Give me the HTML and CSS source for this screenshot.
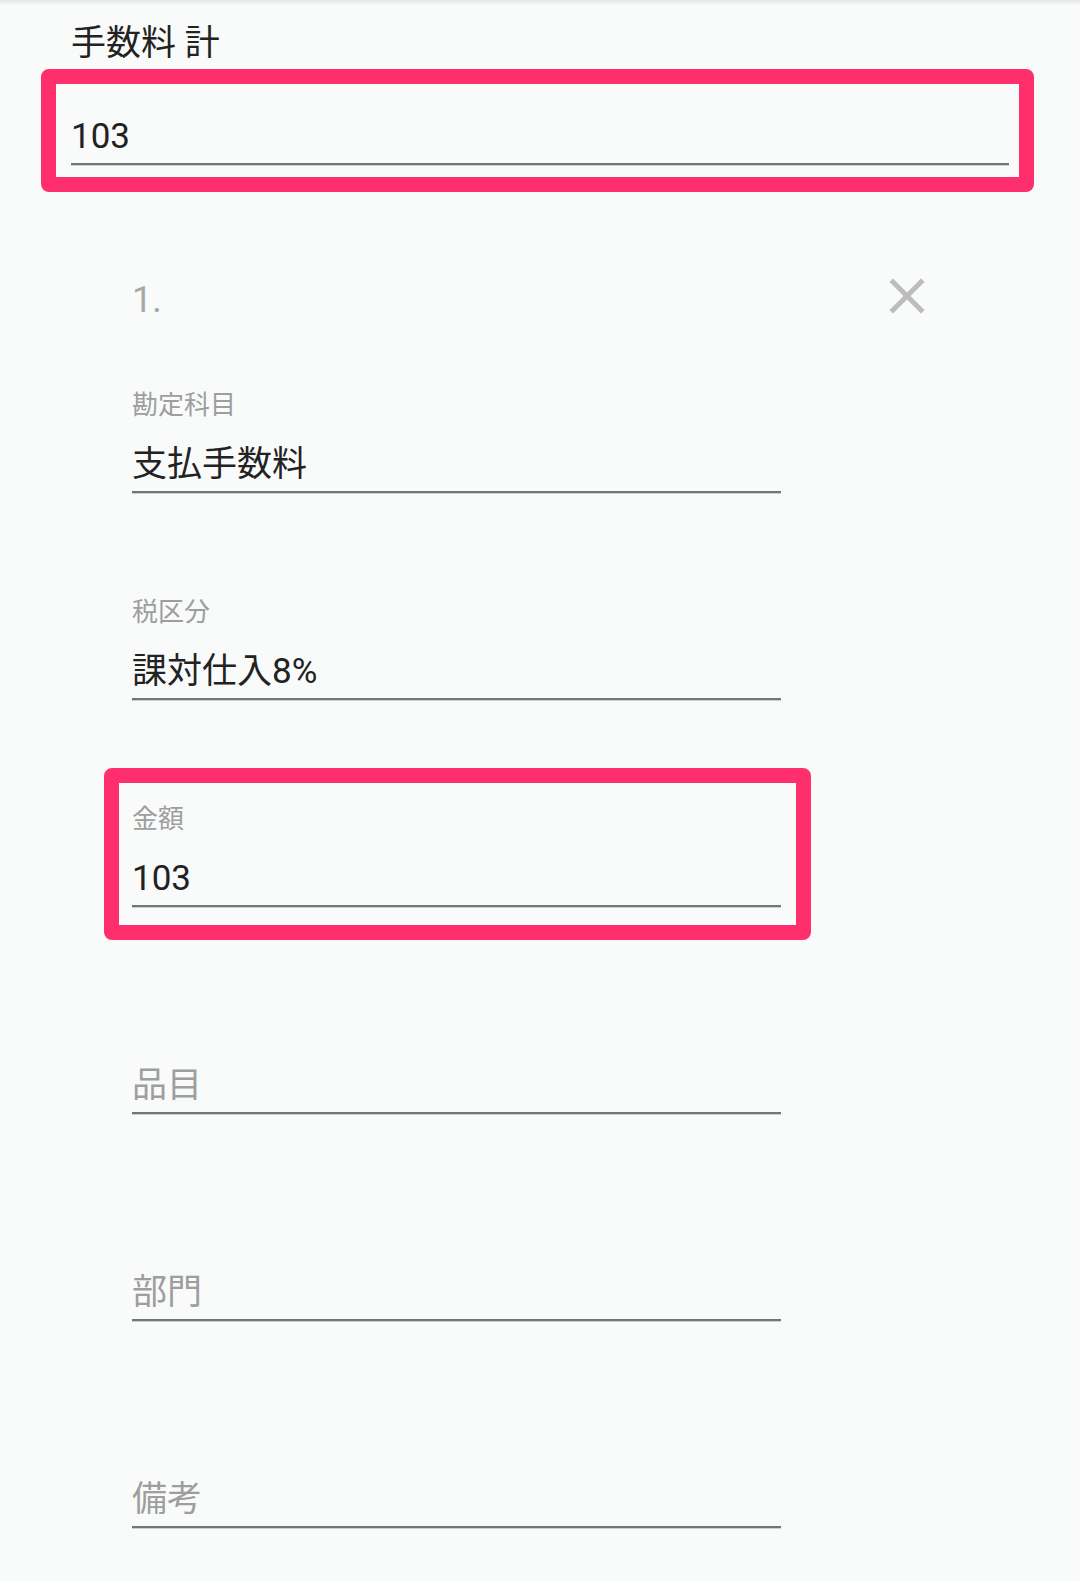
FILE: index.html
```html
<!DOCTYPE html>
<html lang="ja">
<head>
    <meta charset="UTF-8">
    <meta name="viewport" content="width=device-width, initial-scale=1.0">
    <title>手数料</title>
    <link rel="stylesheet" href="styles.css">
</head>
<body>
    <div class="toolbar-shadow"></div>

    <section class="total">
        <div class="total-title">手数料 計</div>
        <div class="mark mark-total">
            <div class="field-value">103</div>
        </div>
    </section>

    <section class="line">
        <div class="line-head">
            <span class="line-no">1.</span>
            <button class="remove" type="button" aria-label="削除">
                <svg viewBox="0 0 24 24" width="60" height="60">
                    <path d="M19 6.41L17.59 5 12 10.59 6.41 5 5 6.41 10.59 12 5 17.59 6.41 19 12 13.41 17.59 19 19 17.59 13.41 12z"/>
                </svg>
            </button>
        </div>

        <div class="fields">
            <div class="field">
                <div class="field-label">勘定科目</div>
                <div class="field-value">支払手数料</div>
            </div>
            <div class="field">
                <div class="field-label">税区分</div>
                <div class="field-value">課対仕入8%</div>
            </div>
            <div class="mark mark-field">
                <div class="field">
                    <div class="field-label">金額</div>
                    <div class="field-value">103</div>
                </div>
            </div>
            <div class="field">
                <div class="field-label"></div>
                <div class="field-value placeholder">品目</div>
            </div>
            <div class="field">
                <div class="field-label"></div>
                <div class="field-value placeholder">部門</div>
            </div>
            <div class="field">
                <div class="field-label"></div>
                <div class="field-value placeholder">備考</div>
            </div>
        </div>
    </section>
</body>
</html>
```

FILE: styles.css
```css
body {
    margin: 0;
    background-color: #f9fafa;
    font-family: "Roboto", "Noto Sans CJK JP", sans-serif;
    color: #222222;
    height: 1581px;
    overflow: hidden;
}
.toolbar-shadow {
    height: 5px;
    background: linear-gradient(#e6e6e6, rgba(249,250,250,0));
}
.total {
    padding: 0 46px 0 41px;
}
.total-title {
    padding-left: 30px;
    margin-top: 15px;
    font-size: 35px;
    line-height: 48px;
}
.mark {
    border: 15px solid #ff2f6e;
    border-radius: 8px;
}
.mark-total {
    margin-top: 1px;
    padding: 29px 10px 12px 15px;
}
.field-value {
    font-size: 35px;
    line-height: 48px;
    padding-bottom: 2px;
    border-bottom: 2px solid #757575;
    box-shadow: 0 1px 0 #cfcfcf;
}
.field-value.placeholder {
    color: #9e9e9e;
}
.line {
    padding: 0 299px 0 132px;
}
.line-head {
    margin-top: 82px;
    margin-right: -156px;
    display: flex;
    justify-content: space-between;
    align-items: center;
}
.line-no {
    font-size: 36px;
    line-height: 48px;
    color: #a8a8a8;
}
.remove {
    background: none;
    border: none;
    padding: 0;
    margin-top: -8px;
    width: 60px;
    height: 60px;
    cursor: pointer;
}
.remove svg {
    display: block;
    fill: #bdbdbd;
}
.fields {
    margin-top: 62px;
    display: flex;
    flex-direction: column;
    gap: 102px;
}
.field-label {
    height: 34px;
    margin-bottom: 19px;
    font-size: 26px;
    line-height: 34px;
    color: #9e9e9e;
}
.mark-field {
    margin: -34px -30px -33px -28px;
    padding: 19px 15px 18px 13px;
}
```
